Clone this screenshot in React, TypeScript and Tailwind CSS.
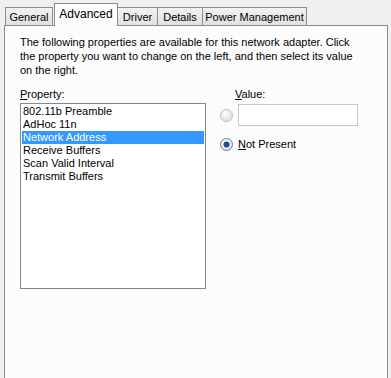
import React from "react";

const tabs = [
	{ label: "General", w: "w-[48px] border-l" },
	{ label: "Advanced", w: "w-[64px]" },
	{ label: "Driver", w: "w-[40px]" },
	{ label: "Details", w: "w-[45px]" },
	{ label: "Power Management", w: "w-[104px]" },
];
const items = [
	"802.11b Preamble",
	"AdHoc 11n",
	"Network Address",
	"Receive Buffers",
	"Scan Valid Interval",
	"Transmit Buffers",
];

function Radio({ checked }: { checked?: boolean }) {
	return (
		<svg width="13" height="13" viewBox="0 0 13 13" className="shrink-0">
			<defs>
				<radialGradient id={checked ? "rg-on" : "rg-off"} cx="40%" cy="35%" r="70%">
					<stop offset="0%" stopColor="#ffffff" />
					<stop offset="100%" stopColor={checked ? "#d6e4f2" : "#d9d9d9"} />
				</radialGradient>
			</defs>
			<circle cx="6.5" cy="6.5" r="6" fill={`url(#${checked ? "rg-on" : "rg-off"})`} stroke={checked ? "#5b7fa6" : "#bcbcbc"} />
			{checked && <circle cx="6.5" cy="6.5" r="3" fill="#1d4f8a" />}
		</svg>
	);
}

export default function App() {
	return (
		<div className="w-[391px] h-[378px] overflow-hidden bg-[#f0f0f0] text-[11px] leading-[14px] text-black" style={{ fontFamily: '"Liberation Sans", Arial, sans-serif' }}>
			{/* tab strip */}
			<div className="flex items-end h-[25px] pl-[5px] relative z-10">
				{tabs.map((t) => {
					const active = t.label === "Advanced";
					return active ? (
						<div key={t.label} className={`${t.w} h-[23px] ml-[1px] pt-[3px] text-center border border-b-0 border-[#898c95] bg-[#fcfcfc] mb-[-1px] text-[12px] relative z-10`}>
							{t.label}
						</div>
					) : (
						<div key={t.label} className={`${t.w} h-[18px] pt-[2px] text-center border-t border-r border-[#898c95] bg-gradient-to-b from-[#f2f2f2] to-[#e1e1e1]`}>
							{t.label}
						</div>
					);
				})}
			</div>

			{/* panel */}
			<div className="ml-[4px] w-[384px] h-[360px] border border-[#898c95] bg-[#fcfcfc] px-[15px] pt-[9px]">
				<p className="w-[340px]">
					The following properties are available for this network adapter. Click the property you want to change on the left, and then select its value on the right.
				</p>

				<div className="flex mt-[10px]">
					<div className="w-[216px]">
						<div className="mb-[2px]">
							<span className="underline">P</span>roperty:
						</div>
						<div className="w-[186px] h-[186px] border border-[#828790] bg-white p-[1px] leading-[13px]">
							{items.map((it) => (
								<div key={it} className={`px-[1px] ${it === "Network Address" ? "bg-[#3399ff] text-white" : ""}`}>
									{it}
								</div>
							))}
						</div>
					</div>

					<div className="flex-1">
						<div className="mb-[3px] -ml-[1px]">
							<span className="underline">V</span>alue:
						</div>
						<div className="flex items-center gap-[5px] -ml-[16px]">
							<Radio />
							<div className="w-[120px] h-[22px] border border-[#c8c8c8] bg-white" />
						</div>
						<div className="flex items-center gap-[5px] -ml-[16px] mt-[11px]">
							<Radio checked />
							<span>
								<span className="underline">N</span>ot Present
							</span>
						</div>
					</div>
				</div>
			</div>
		</div>
	);
}
